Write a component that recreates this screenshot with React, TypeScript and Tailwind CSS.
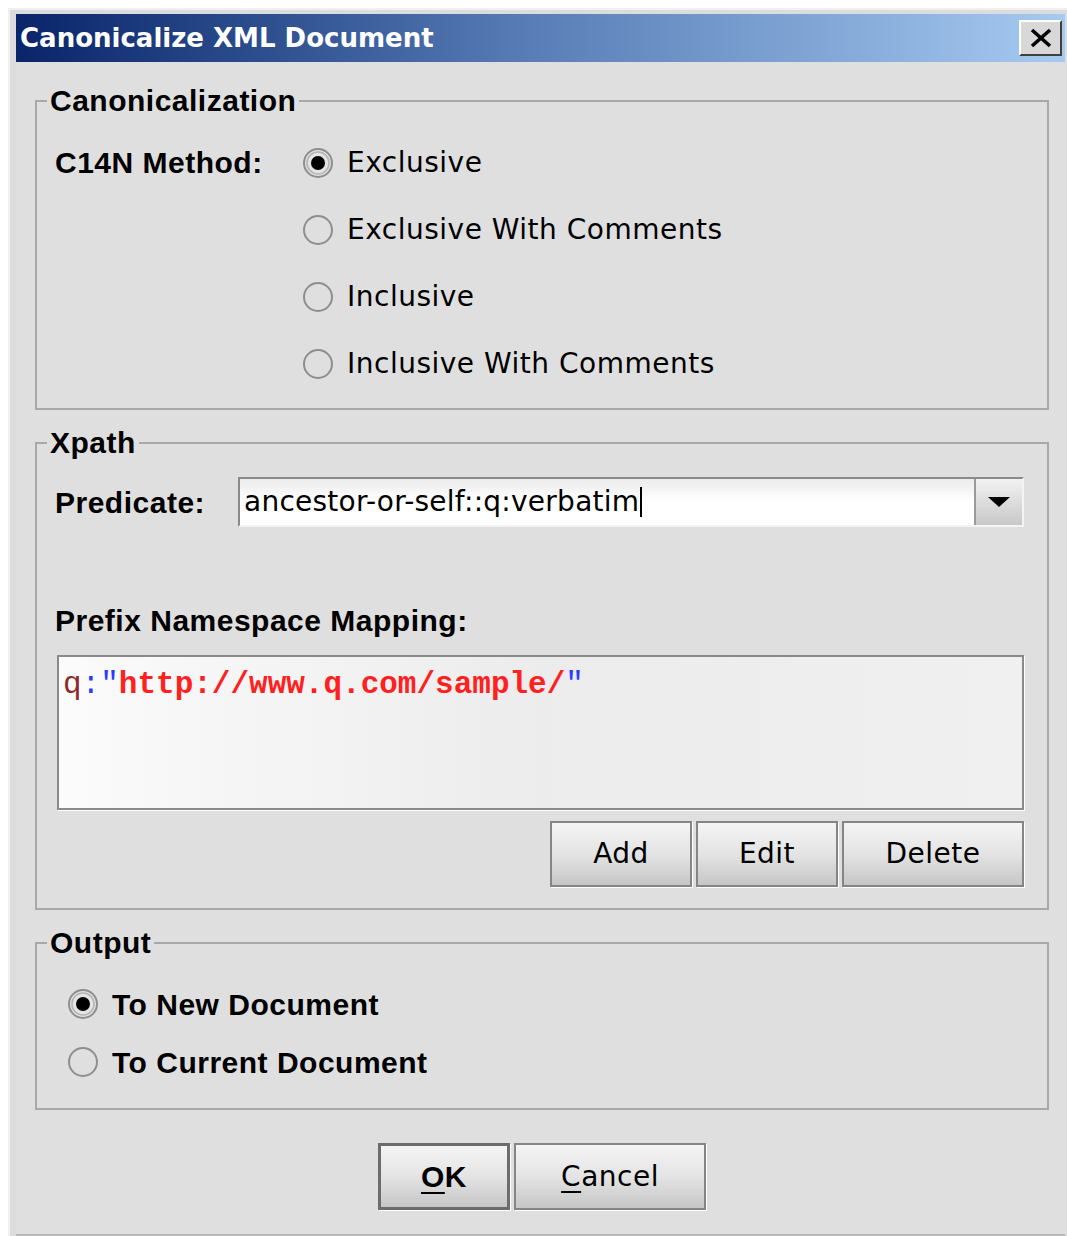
import type { ReactNode } from "react";

const REG = "font-['DejaVu_Sans',sans-serif] text-[28px] tracking-[0.5px] text-black";
const BOLD = "font-['Liberation_Sans',Arial,sans-serif] text-[30px] font-bold tracking-[0.5px] text-black";

function Radio({ checked }: { checked?: boolean }) {
  return (
    <svg width="32" height="32" viewBox="0 0 32 32" className="shrink-0">
      <circle cx="16" cy="16" r="14" fill="none" stroke="#8e8e8e" strokeWidth="2" />
      {checked && (
        <>
          <circle cx="16" cy="16" r="11" fill="#e4e4e4" stroke="#b4b4b4" strokeWidth="1.5" />
          <circle cx="16" cy="16" r="7" fill="#000" />
        </>
      )}
    </svg>
  );
}

function Group({ title, children, className = "" }: { title: string; children: ReactNode; className?: string }) {
  return (
    <fieldset className={`border-2 border-[#a8a8a8] ${className}`}>
      <legend className={`ml-[10px] px-[3px] leading-[32px] ${BOLD}`}>{title}</legend>
      {children}
    </fieldset>
  );
}

function Button({ children, className = "" }: { children: ReactNode; className?: string }) {
  return (
    <button
      className={`flex items-center justify-center border-2 border-[#858585] bg-gradient-to-b from-[#f4f4f4] via-[#e4e4e4] to-[#c6c6c6] shadow-[1px_1px_0_#ffffff] ${REG} ${className}`}
    >
      {children}
    </button>
  );
}

export default function App() {
  return (
    <div className="h-[1236px] w-[1067px] overflow-hidden bg-white pl-[8px] pt-[8px]">
      <div className="flex h-[1228px] flex-col border-l-2 border-t-2 border-[#f0f0f0] bg-[#dcdcdc] pl-[6px] pr-[2px] pt-[4px]">
        {/* title bar */}
        <div className="flex h-[48px] shrink-0 items-center justify-between bg-gradient-to-r from-[#0a246a] via-[#5a7fb8] to-[#a6caf0] pl-[4px] pr-[3px]">
          <span className="font-['DejaVu_Sans',sans-serif] text-[26px] font-bold leading-none text-white">
            Canonicalize XML Document
          </span>
          <div className="flex h-[36px] w-[43px] items-center justify-center border-2 border-b-[#404040] border-l-white border-r-[#404040] border-t-white bg-[#d8d8d8]">
            <svg width="24" height="20" viewBox="0 0 24 20">
              <path d="M3 2 L21 18 M21 2 L3 18" stroke="#000" strokeWidth="3.6" />
            </svg>
          </div>
        </div>

        {/* dialog body */}
        <div className="flex flex-1 flex-col border-b-2 border-[#b8b8b8] bg-[#dfdfdf] pl-[19px] pr-[16px] pt-[23px]">
          <Group title="Canonicalization">
            <div className="flex pb-[11px] pl-[18px] pt-[12px]">
              <div className={`flex h-[67px] w-[247px] items-center ${BOLD}`}>C14N Method:</div>
              <div className="flex flex-col">
                {["Exclusive", "Exclusive With Comments", "Inclusive", "Inclusive With Comments"].map((m, i) => (
                  <label key={m} className="flex h-[67px] items-center gap-[13px]">
                    <Radio checked={i === 0} />
                    <span className={REG}>{m}</span>
                  </label>
                ))}
              </div>
            </div>
          </Group>

          <Group title="Xpath" className="mt-[17px]">
            <div className="flex flex-col pb-[21px] pl-[18px] pr-[23px] pt-[18px]">
              <div className="flex h-[50px] items-center">
                <div className={`w-[183px] ${BOLD}`}>Predicate:</div>
                <div className="flex h-[50px] flex-1 border-2 border-b-[#f4f4f4] border-l-[#8a8a8a] border-r-[#f4f4f4] border-t-[#8a8a8a]">
                  <div className="flex flex-1 items-center bg-gradient-to-b from-[#ececec] via-white to-white pl-[4px]">
                    <span className="font-['DejaVu_Sans',sans-serif] text-[28px] tracking-[0.25px] text-black">ancestor-or-self::q:verbatim</span>
                    <span className="ml-[1px] h-[30px] w-[2px] bg-black" />
                  </div>
                  <div className="flex w-[48px] items-center justify-center border-l-2 border-[#9a9a9a] bg-gradient-to-b from-[#f2f2f2] to-[#c8c8c8]">
                    <svg width="24" height="12" viewBox="0 0 24 12">
                      <path d="M1 1 H23 L12 11 Z" fill="#000" />
                    </svg>
                  </div>
                </div>
              </div>

              <div className={`mt-[78px] leading-[32px] ${BOLD}`}>Prefix Namespace Mapping:</div>

              <div className="ml-[2px] mt-[18px] h-[155px] border-2 border-[#8a8a8a] bg-gradient-to-r from-[#fbfbfb] via-[#ececec] to-[#f0f0f0] pl-[4px] pt-[10px] shadow-[1px_1px_0_#ffffff]">
                <div className="font-['Liberation_Mono',monospace] text-[31px] leading-[36px]">
                  <span className="text-[#8b2b2b]">q</span>
                  <span className="text-[#2a3cff]">:"</span>
                  <span className="font-bold text-[#ff2020]">http://www.q.com/sample/</span>
                  <span className="text-[#2a3cff]">"</span>
                </div>
              </div>

              <div className="mt-[11px] flex justify-end gap-[4px]">
                <Button className="h-[66px] w-[142px]">Add</Button>
                <Button className="h-[66px] w-[142px]">Edit</Button>
                <Button className="h-[66px] w-[182px]">Delete</Button>
              </div>
            </div>
          </Group>

          <Group title="Output" className="mt-[17px]">
            <div className="flex flex-col pb-[17px] pl-[30px] pt-[16px]">
              {["To New Document", "To Current Document"].map((o, i) => (
                <label key={o} className="flex h-[58px] items-center gap-[13px]">
                  <Radio checked={i === 0} />
                  <span className={BOLD}>{o}</span>
                </label>
              ))}
            </div>
          </Group>

          <div className="mt-[33px] flex justify-center gap-[4px]">
            <button className="flex h-[67px] w-[132px] items-center justify-center border-[3px] border-[#6c6c6c] bg-gradient-to-b from-[#f4f4f4] via-[#e4e4e4] to-[#c6c6c6] shadow-[1px_1px_0_#ffffff]">
              <span className={BOLD}>
                <span className="underline decoration-2 underline-offset-[5px]">O</span>K
              </span>
            </button>
            <Button className="h-[67px] w-[192px]">
              <span>
                <span className="underline decoration-2 underline-offset-[5px]">C</span>ancel
              </span>
            </Button>
          </div>
        </div>
      </div>
    </div>
  );
}
